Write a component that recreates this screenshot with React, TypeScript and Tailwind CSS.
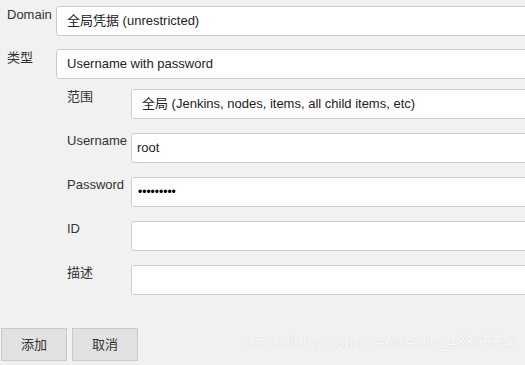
import React from "react";

const font = "font-['Liberation_Sans','Arial','Noto_Sans_CJK_SC',sans-serif]";

function Box({ children, pad = "pl-[10px]" }: { children?: React.ReactNode; pad?: string }) {
  return (
    <div
      className={`flex-1 h-[30px] mr-[-20px] bg-white border border-[#cccccc] rounded-[3px] flex items-center ${pad} text-[13px] text-[#222222] whitespace-nowrap overflow-hidden`}
    >
      {children}
    </div>
  );
}

function SubRow({ label, children, pad, first }: { label: string; children?: React.ReactNode; pad?: string; first?: boolean }) {
  return (
    <div className={`flex ${first ? "" : "mt-[14px]"}`}>
      <div className="w-[64px] shrink-0 text-[13px] leading-[15px] text-[#333333] whitespace-nowrap">{label}</div>
      <Box pad={pad}>{children}</Box>
    </div>
  );
}

export default function App() {
  return (
    <div className={`relative w-[525px] h-[365px] bg-[#f1f1f1] overflow-hidden ${font}`}>
      <div className="flex flex-col pt-[6px]">
        <div className="flex">
          <div className="w-[56px] shrink-0 pl-[7px] pt-[1px] text-[13px] leading-[15px] text-[#333333]">Domain</div>
          <Box>全局凭据 (unrestricted)</Box>
        </div>
        <div className="flex mt-[13px]">
          <div className="w-[56px] shrink-0 pl-[7px] pt-[1px] text-[13px] leading-[15px] text-[#333333]">类型</div>
          <Box>Username with password</Box>
        </div>
        <div className="flex flex-col pl-[67px] mt-[10px]">
          <SubRow label="范围" first>全局 (Jenkins, nodes, items, all child items, etc)</SubRow>
          <SubRow label="Username" pad="pl-[5px]">root</SubRow>
          <SubRow label="Password" pad="pl-[6px]">
            <span className="text-[12px] text-black">•••••••••</span>
          </SubRow>
          <SubRow label="ID" />
          <SubRow label="描述" />
        </div>
        <div className="flex gap-[5px] ml-[1px] mt-[33px]">
          <button className="w-[66px] h-[33px] bg-[#e1e1e1] border border-[#cacaca] text-[13px] text-[#333333]">添加</button>
          <button className="w-[66px] h-[33px] bg-[#e1e1e1] border border-[#cacaca] text-[13px] text-[#333333]">取消</button>
        </div>
      </div>
      <div className="absolute left-[246px] top-[334px] text-[16px] leading-[18px] text-[#fafafa] whitespace-nowrap [text-shadow:0_0_1px_rgba(0,0,0,0.18)]">
        https://blog.csdn.net/weixin_43865541
      </div>
    </div>
  );
}
